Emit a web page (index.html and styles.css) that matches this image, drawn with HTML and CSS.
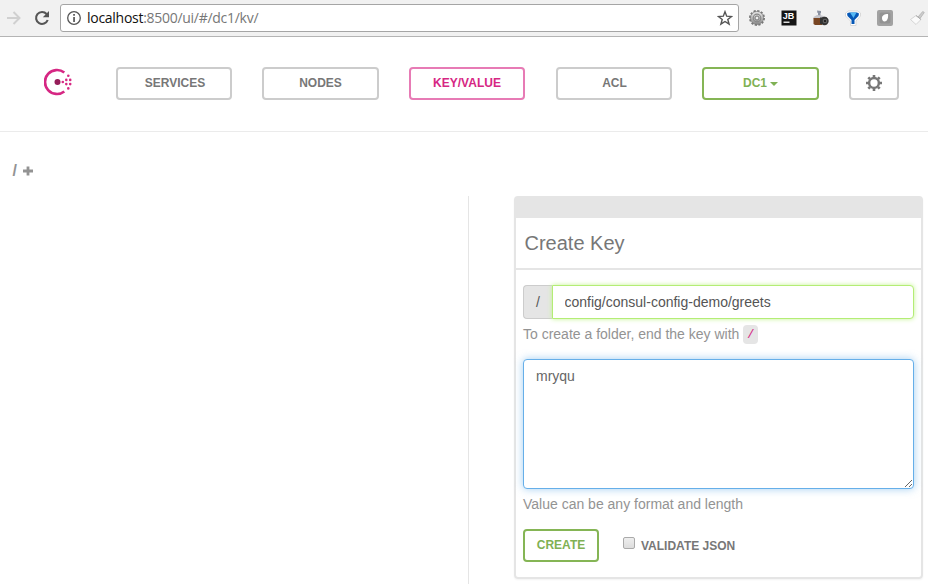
FILE: index.html
```
<!DOCTYPE html>
<html lang="en">
<head>
<meta charset="utf-8">
<title>Consul</title>
<link rel="stylesheet" href="styles.css">
</head>
<body>
<div class="toolbar">
  <svg class="forward" width="16" height="16" viewBox="0 0 16 16"><path d="M1 8h12.500M7.500 2l6 6-6 6" fill="none" stroke="#d0d0d0" stroke-width="2"/></svg>
  <svg class="reload" width="16" height="16" viewBox="0 0 16 16"><path d="M13.700 10A6 6 0 1 1 12.600 4" fill="none" stroke="#555" stroke-width="2.100"/><path d="M15 1v6.200H8.800z" fill="#555"/></svg>
  <div class="address">
    <svg width="14" height="14" viewBox="0 0 14 14"><circle cx="7" cy="7" r="6.300" fill="none" stroke="#555" stroke-width="1.300"/><path d="M6.200 3h1.700v1.700H6.200zM6.200 6h1.700v5H6.200z" fill="#555"/></svg>
    <span class="url"><b>localhost</b>:8500/ui/#/dc1/kv/</span>
    <svg class="star" width="16" height="16" viewBox="0 0 16 16"><path d="M8 1.700l1.700 4.500 4.800.3-3.700 3 1.300 4.700L8 11.500l-4.100 2.700 1.300-4.700-3.700-3 4.800-.3z" fill="none" stroke="#555" stroke-width="1.400"/></svg>
  </div>
  <div class="extensions">
    <svg width="18" height="18" viewBox="0 0 18 18"><defs><linearGradient id="metal" x2="0" y2="1"><stop stop-color="#eee"/><stop offset="1" stop-color="#888"/></linearGradient></defs><circle cx="9" cy="9" r="7" fill="none" stroke="#777" stroke-width="2" stroke-dasharray="2.200 1.465"/><circle cx="9" cy="9" r="6.500" fill="url(#metal)" stroke="#777" stroke-width=".7"/><circle cx="9" cy="9" r="3.800" fill="none" stroke="#888" stroke-width="1.200"/><circle cx="9" cy="9" r="2" fill="#eee" stroke="#777"/></svg>
    <svg width="18" height="18" viewBox="0 0 18 18"><path d="M1.500 1.500h15v15h-15z" fill="#151515"/><text class="jb" x="2.800" y="9.500">JB</text><path d="M3.500 12.500h6V14h-6z" fill="#ddd"/></svg>
    <svg width="18" height="18" viewBox="0 0 18 18"><path d="M5 1.500l4 .5v2H5.500zM6 4h2.500v3H6z" fill="#8b92a2"/><path d="M1.500 8L5 6l5 .5 4 1.500v2H1.500z" fill="#c5c5cb"/><path d="M1.500 9h8.500v7H3l-1.500-1z" fill="#784522"/><path d="M8 8.500h7V15H8z" fill="#333"/><circle cx="12.500" cy="12" r="4.200" fill="#333"/><circle cx="13" cy="12" r="2.300" fill="#666"/><circle cx="13" cy="12" r="1.200" fill="#222"/></svg>
    <svg width="18" height="18" viewBox="0 0 18 18"><path d="M1.500 4l3-2h9l3 2v3L12 12v4.500H6.500V12l-5-5z" fill="#fff" stroke="#ccc" stroke-width=".7"/><path d="M3 4.500l2-1h8l2 1L14.500 7l-4 4v4h-3v-4l-4-4z" fill="#0758b6"/><path d="M6 3.500h6.500L9.500 9z" fill="#55b9f5"/></svg>
    <svg width="18" height="18" viewBox="0 0 18 18"><rect x="1" y="1" width="16" height="16" rx="2" fill="#a2a2a2"/><rect x="3.500" y="3.500" width="11" height="11" rx="2" fill="#939393"/><path d="M6 9c0-2.500 2.500-4 6-4 .6 4-1 7.500-3.500 7.500C7 12.500 6 11 6 9z" fill="#fff"/></svg>
    <svg width="18" height="18" viewBox="0 0 18 18"><path d="M10 8l4.700-5.500 1.600 1L12 9.500z" fill="#ccc" stroke="#aaa" stroke-width=".7"/><path d="M8 6.500l5 4-5 5-5.500-5z" fill="#fafafa" stroke="#ccc" stroke-width=".8"/><path d="M8 6.500l5 4" stroke="#aaa"/></svg>
  </div>
</div>

<nav class="nav">
  <svg class="logo" width="28" height="28" viewBox="0 0 28 28"><path d="M20.300 4.500A12 12 0 1 0 20.300 23.500" fill="none" stroke="#d62783" stroke-width="2.700"/><circle cx="13.500" cy="14" r="3" fill="#961d59"/><g fill="#d62783"><circle cx="18.800" cy="14" r="1.300"/><circle cx="22.300" cy="11.900" r="1.300"/><circle cx="22.300" cy="16.100" r="1.300"/><circle cx="26.200" cy="11.900" r="1.300"/><circle cx="26.200" cy="16.100" r="1.300"/><circle cx="24.300" cy="7.700" r="1.300"/><circle cx="24.300" cy="20.400" r="1.300"/></g></svg>
  <a class="btn services">SERVICES</a>
  <a class="btn wide">NODES</a>
  <a class="btn active">KEY/VALUE</a>
  <a class="btn acl">ACL</a>
  <a class="btn wide green">DC1<i class="caret"></i></a>
  <a class="btn settings"><svg width="16" height="16" viewBox="0 0 16 16"><circle cx="8" cy="8" r="4.900" fill="none" stroke="#777" stroke-width="2.500"/><path fill="none" stroke="#777" stroke-width="2.600" d="M8 0v2.500M8 13.500V16M0 8h2.500M13.500 8H16M2.300 2.300L4 4M12 12l1.700 1.700M2.300 13.700L4 12M12 4l1.700-1.700"/></svg></a>
</nav>

<div class="breadcrumbs"><span>/</span><svg width="10" height="10" viewBox="0 0 10 10"><path d="M0 5h10M5 .5v9" stroke="#939393" stroke-width="2.800"/></svg></div>

<main class="content">
  <div class="keys"></div>
  <section class="panel">
    <div class="panel-bar"></div>
    <h3>Create Key</h3>
    <form class="panel-body">
      <div class="input-group"><span class="addon">/</span><input type="text" value="config/consul-config-demo/greets"></div>
      <p class="help key-help">To create a folder, end the key with <code>/</code></p>
      <textarea>mryqu</textarea>
      <p class="help">Value can be any format and length</p>
      <div class="actions"><button class="btn create" type="button">CREATE</button><label><i class="check"></i><span>VALIDATE JSON</span></label></div>
    </form>
  </section>
</main>
</body>
</html>
```
FILE: styles.css
```
* { box-sizing: border-box; }
html { overflow: hidden; }
body { margin: 0; height: 584px; overflow: hidden; background: #fff; color: #777; font: 14px/20px "Liberation Sans", Arial, sans-serif; }
svg { display: block; flex: none; }

.toolbar { display: flex; height: 37px; padding: 4px 0 0 6px; background: #f1f1f1; border-bottom: 1px solid #b4b4b4; }
.forward { margin-top: 6px; }
.reload { margin: 6px 0 0 12px; }
.address { display: flex; align-items: center; width: 679px; height: 28px; margin-left: 10px; padding: 0 5px 0 6px; background: #fff; border: 1px solid #a5a5a5; border-radius: 3px; flex: none; }
.url { margin-left: 6px; font: 14px/20px "Open Sans", sans-serif; letter-spacing: -.28px; color: #777; }
.url b { font-weight: 400; color: #111; }
.star { margin-left: auto; }
.extensions { display: flex; gap: 14px; margin: 5px 0 0 9px; }
.jb { font: bold 9px "Liberation Sans", sans-serif; fill: #fff; }

.nav { display: flex; height: 95px; padding: 30px 0 0 44px; border-bottom: 1px solid #ebebeb; }
.logo { margin: 1px 14px 0 0; }
.btn { display: flex; align-items: center; justify-content: center; width: 116px; height: 33px; padding: 0 0 2px; border: 2px solid #ccc; border-radius: 4px; background: #fff; color: #777; font: bold 12px/18px "Liberation Sans", Arial, sans-serif; letter-spacing: 0; flex: none; }
.nav .btn { margin-left: 30px; }
.nav .services { padding-left: 2px; }
.nav .wide { width: 117px; }
.nav .active { border-color: #e77bb5; color: #d62783; }
.nav .acl { margin-left: 31px; padding-left: 1px; }
.nav .green, .create { border-color: #85b555; color: #7fb154; }
.caret { margin: 2px 0 0 3px; border: 4px solid transparent; border-top-color: #7fb154; border-bottom: 0; }
.nav .settings { width: 50px; padding: 0 0 1px; }

.breadcrumbs { display: flex; align-items: center; gap: 6px; height: 64px; padding: 13px 0 0 12.5px; color: #939393; font-weight: 700; font-size: 16px; }

.content { display: flex; height: 388px; }
.keys { width: 469px; border-right: 1px solid #e5e5e5; }
.panel { width: 409px; height: 383px; margin-left: 45px; border: 2px solid #e5e5e5; border-radius: 4px; box-shadow: 0 1px 2px rgba(0,0,0,.05); }
.panel-bar { height: 20px; background: #e5e5e5; }
h3 { height: 52px; margin: 0; padding: 12px 8.5px 0; border-bottom: 2px solid #e5e5e5; color: #777; font-size: 20px; line-height: 26px; font-weight: 400; }
.panel-body { padding: 15px 7px 0; }
.input-group { display: flex; height: 34px; }
.addon { width: 29px; border: 1px solid #ccc; border-right: 0; border-radius: 4px 0 0 4px; background: #e5e5e5; color: #555; text-align: center; font-size: 14px; line-height: 32px; }
input { flex: 1; min-width: 0; padding: 0 11.5px; border: 1px solid #b4ed75; border-radius: 0 4px 4px 0; outline: 0; box-shadow: 0 0 5px #c5f493; color: #555; font: 14px/20px "Liberation Sans", Arial, sans-serif; }
.help { height: 20px; margin: 5px 0 0; color: #939393; white-space: nowrap; }
.key-help { margin-bottom: 15px; }
code { display: inline-block; width: 15px; height: 19px; margin-top: 1px; border-radius: 4px; background: #e5e5e5; color: #d62783; text-align: center; vertical-align: top; font: 12.6px/21px "Liberation Mono", monospace; }
textarea { display: block; width: 391px; height: 130px; padding: 6px 12px; border: 1px solid #66afe9; border-radius: 4px; outline: 0; box-shadow: 0 0 8px rgba(102,175,233,.6); color: #666; font: 14px/20px "Liberation Sans", Arial, sans-serif; resize: both; }
.actions { display: flex; margin-top: 15px; }
.create { width: 76px; }
label { display: flex; margin-left: 24px; gap: 6px; font-size: 12px; font-weight: 700; letter-spacing: 0; }
label span { margin-top: 7px; }
.check { width: 12px; height: 12px; margin-top: 8px; border: 1px solid #aaa; border-radius: 2px; background: linear-gradient(#eee, #ddd); }
```
